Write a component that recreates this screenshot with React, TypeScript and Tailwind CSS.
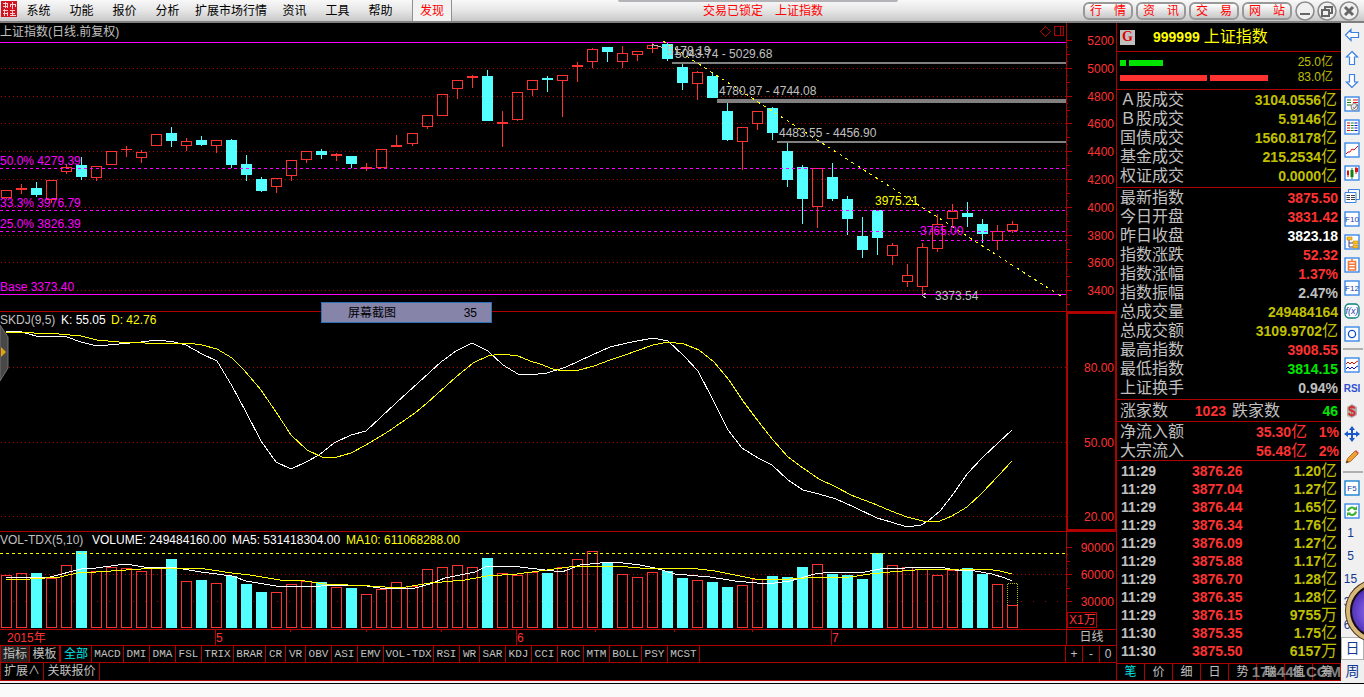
import React from "react";

type Candle = [boolean, number, number, number, number, number];

// up?, high, body top, body bottom, low, volume top
const CANDLES: Candle[] = [
  [true, 190, 190, 198, 199, 575], [true, 184, 188, 190, 194, 573], [false, 182, 188, 195, 197, 573],
  [true, 180, 180, 200, 203, 578], [true, 164, 167, 172, 174, 565], [false, 157, 165, 177, 180, 551],
  [true, 166, 166, 178, 181, 571], [true, 151, 151, 165, 165, 567], [true, 146, 149, 150, 157, 568],
  [true, 150, 152, 158, 163, 571], [true, 134, 134, 146, 146, 568], [false, 127, 133, 141, 147, 559],
  [true, 138, 141, 146, 151, 581], [false, 136, 140, 145, 146, 580], [true, 140, 140, 146, 153, 583],
  [false, 139, 140, 165, 168, 576], [false, 155, 164, 175, 181, 584], [false, 177, 179, 191, 192, 592],
  [true, 178, 178, 187, 193, 592], [true, 160, 160, 176, 181, 584], [true, 151, 151, 160, 163, 581],
  [false, 149, 151, 155, 159, 582], [true, 153, 154, 156, 161, 587], [false, 156, 156, 164, 168, 588],
  [true, 163, 167, 169, 171, 594], [true, 149, 149, 168, 168, 589], [true, 135, 145, 147, 147, 582],
  [true, 133, 133, 144, 146, 586], [true, 115, 115, 127, 129, 569], [true, 94, 94, 116, 116, 567],
  [true, 80, 80, 89, 99, 565], [true, 75, 76, 78, 88, 567], [false, 70, 76, 121, 121, 558],
  [true, 111, 122, 124, 147, 573], [true, 92, 92, 120, 121, 575], [true, 80, 80, 90, 96, 572],
  [false, 76, 78, 80, 92, 573], [true, 75, 75, 81, 117, 567], [true, 62, 65, 67, 82, 559],
  [true, 48, 49, 62, 68, 551], [false, 47, 47, 52, 62, 562], [true, 46, 53, 62, 68, 574],
  [true, 51, 51, 55, 61, 577], [true, 43, 45, 49, 53, 572], [false, 43, 44, 59, 61, 571],
  [false, 64, 67, 83, 90, 578], [true, 71, 72, 84, 100, 580], [false, 73, 76, 98, 98, 582],
  [false, 103, 111, 140, 141, 587], [true, 127, 127, 142, 170, 585], [true, 111, 111, 124, 130, 579],
  [false, 107, 108, 133, 140, 576], [false, 143, 151, 180, 187, 577], [false, 165, 167, 199, 224, 567],
  [true, 168, 168, 207, 228, 564], [false, 163, 177, 199, 201, 574], [false, 196, 199, 219, 235, 575],
  [false, 217, 236, 250, 258, 579], [false, 210, 210, 238, 255, 553], [true, 243, 245, 256, 265, 565],
  [true, 264, 275, 282, 287, 567], [true, 243, 247, 287, 294, 569], [true, 214, 224, 249, 252, 575],
  [true, 204, 211, 219, 228, 570], [false, 202, 213, 217, 227, 568], [false, 219, 224, 234, 243, 574],
  [true, 225, 231, 241, 250, 584], [true, 221, 224, 231, 233, 605],
];

const K_LINE = "6,331 22,332 36,336 67,337 81,342 97,346 119,344 141,342 157,340 174,342 186,345 202,354 217,361 232,386 246,412 261,441 276,462 291,469 306,462 319,455 334,443 351,435 366,431 396,403 441,362 456,351 472,343 488,351 503,365 518,374 530,375 547,373 566,367 592,355 610,347 627,343 653,338 668,341 684,356 698,371 713,400 728,430 742,448 758,458 772,465 788,480 803,490 819,494 836,499 854,507 877,518 891,522 907,527 921,525 928,521 940,511 954,493 967,474 982,458 999,442 1012,430";
const D_LINE = "6,333 22,332 34,333 59,334 81,336 97,340 119,342 145,343 165,343 188,343 202,345 217,349 232,358 244,370 261,390 276,412 291,435 307,450 322,457 337,457 351,453 366,445 389,431 415,413 427,403 456,377 473,363 488,356 501,354 518,356 530,361 540,364 553,369 564,371 579,370 594,366 610,360 625,355 653,345 668,342 684,344 699,350 714,362 729,380 743,401 758,421 773,440 788,457 803,468 819,479 836,487 851,495 877,505 891,511 907,517 923,521 940,521 952,516 967,507 982,493 999,475 1012,461";
const MA5_LINE = "6,577 50,577 81,569 96,568 126,564 150,568 171,567 201,572 232,576 246,581 276,586 306,587 336,585 360,585 380,588 415,588 430,584 445,578 475,572 487,566 520,567 562,572 580,565 600,563 615,562 640,565 655,568 675,574 710,577 735,581 757,583 775,583 790,581 815,574 832,572 865,572 880,569 905,568 930,567 940,567 955,570 975,571 992,574 1005,578 1012,581";
const MA10_LINE = "6,580 30,579 60,577 81,572 96,572 126,570 156,568 171,568 205,569 232,573 250,575 280,580 305,581 325,584 370,586 400,588 430,583 465,580 487,576 517,574 547,570 577,566 615,566 640,568 690,568 715,571 755,579 790,579 805,578 850,577 870,574 890,572 915,570 960,569 985,569 1000,571 1012,574";

const UP = "#ff3232";
const DOWN = "#54ffff";
const GRID = "#b00000";
const MAGENTA = "#ff00ff";

const centerX = (i: number) => Math.floor(6.6 + 15.015 * i);

function Hollow({ x, top, bottom }: { x: number; top: number; bottom: number }) {
  if (bottom - top <= 2) return <rect x={x - 5} y={top} width={11} height={bottom - top} fill={UP} />;
  return <rect x={x - 4.5} y={top + 0.5} width={10} height={bottom - top - 1} fill="none" stroke={UP} />;
}

function GridLine({ y, gap = "1 3" }: { y: number; gap?: string }) {
  return <line x1={1} x2="100%" y1={y + 0.5} y2={y + 0.5} stroke={GRID} strokeDasharray={gap} />;
}

const PRICES = [5200, 5000, 4800, 4600, 4400, 4200, 4000, 3800, 3600, 3400];
const PRICE_Y = [40, 68, 96, 123, 151, 179, 207, 235, 262, 290];

function PricePlot() {
  return (
    <svg className="block h-full min-w-0 flex-1 text-[12px]" shapeRendering="crispEdges" role="img" aria-label="上证指数日线">
      <g transform="translate(0,-23)">
        {PRICE_Y.slice(1).map((y) => <GridLine key={y} y={y} />)}
        {CANDLES.map(([up, high, top, bottom, low], i) => {
          const x = centerX(i);
          return (
            <g key={i} fill={up ? UP : DOWN}>
              <rect x={x} y={high} width={1} height={top - high} />
              <rect x={x} y={bottom} width={1} height={low - bottom} />
              {up ? <Hollow x={x} top={top} bottom={bottom} /> : <rect x={x - 5} y={top} width={11} height={bottom - top} />}
            </g>
          );
        })}
        <g fill="#808080">
          <rect x={672} y={62} width="100%" height={2} />
          <rect x={717} y={99} width="100%" height={4} />
          <rect x={777} y={141} width="100%" height={2} />
        </g>
        <g stroke={MAGENTA}>
          <line x1={0} x2="100%" y1={42.5} y2={42.5} />
          <line x1={0} x2="100%" y1={294.5} y2={294.5} />
          {[168, 210, 231].map((y) => (
            <line key={y} x1={0} x2="100%" y1={y + 0.5} y2={y + 0.5} strokeDasharray="3 3" />
          ))}
          <line x1={921} x2="100%" y1={240.5} y2={240.5} strokeDasharray="3 3" />
        </g>
        <line x1={663} y1={41} x2={1062} y2={297} stroke="#ffff00" strokeDasharray="3 4" />
        <path d="M652.5 43.5v4M652.5 44.5l14 4M922.5 295.5l4-3M922.5 295.5l4 3" stroke="#c0c0c0" fill="none" />
        <path d="M1045.5 26.5l5 5l-5 5l-5-5z" stroke={GRID} fill="none" />
        <path d="M1054.5 26.5h9v9h-9zM1060.5 26.5v9" stroke={GRID} fill="none" />
        <g fill="#c0c0c0">
          <text x={0} y={36}>上证指数(日线.前复权)</text>
          <text x={667} y={55}>5178.19</text>
          <text x={675} y={58}>5043.74 - 5029.68</text>
          <text x={719} y={95}>4780.87 - 4744.08</text>
          <text x={779} y={137}>4483.55 - 4456.90</text>
          <text x={935} y={300}>3373.54</text>
        </g>
        <g fill={MAGENTA}>
          <text x={0} y={165}>50.0% 4279.39</text>
          <text x={0} y={207}>33.3% 3976.79</text>
          <text x={0} y={228}>25.0% 3826.39</text>
          <text x={0} y={291}>Base 3373.40</text>
          <text x={920} y={235}>3765.00</text>
        </g>
        <text x={875} y={205} fill="#ffff00">3975.21</text>
      </g>
    </svg>
  );
}

function PriceAxis() {
  const ticks: React.ReactNode[] = [];
  for (let n = 0; n < 40; n++) {
    const y = Math.round(40 + n * 6.95);
    if (y > 305) break;
    ticks.push(<rect key={n} x={0} y={y} width={n % 4 === 0 ? 5 : n % 2 === 0 ? 3 : 1} height={1} fill={GRID} />);
  }
  return (
    <svg className="block h-full w-[51px] border-x border-[#b00000] text-[12px]" shapeRendering="crispEdges">
      <g transform="translate(0,-23)">
        {ticks}
        {PRICES.map((p, i) => (
          <text key={p} x={47} y={PRICE_Y[i] + 5} textAnchor="end" fill={UP}>{p}</text>
        ))}
      </g>
    </svg>
  );
}

function KdjPane() {
  return (
    <section className="flex h-[220px] border-b border-[#b00000]">
      <svg className="block h-full min-w-0 flex-1 text-[12px]" shapeRendering="crispEdges" role="img" aria-label="SKDJ">
        <g transform="translate(0,-312)">
          {[367, 442, 516].map((y) => <GridLine key={y} y={y} />)}
          <polyline points={K_LINE} fill="none" stroke="#ffffff" />
          <polyline points={D_LINE} fill="none" stroke="#ffff00" />
          <text x={0} y={324} fill="#c0c0c0">SKDJ(9,5)</text>
          <text x={61} y={324} fill="#ffffff">K: 55.05</text>
          <text x={111} y={324} fill="#ffff00">D: 42.76</text>
        </g>
      </svg>
      <svg className="block h-full w-[51px] border-2 border-[#b00000] text-[12px]">
        <g fill={UP} textAnchor="end">
          <text x={46} y={58}>80.00</text>
          <text x={46} y={133}>50.00</text>
          <text x={46} y={207}>20.00</text>
        </g>
      </svg>
    </section>
  );
}

function VolumePane() {
  return (
    <section className="flex h-[98px] border-b border-[#b00000]">
      <svg className="block h-full min-w-0 flex-1 text-[12px]" shapeRendering="crispEdges" role="img" aria-label="成交量">
        <g transform="translate(0,-532)">
          <GridLine y={574} />
          <GridLine y={601} gap="1 11" />
          {CANDLES.map(([up, , , , , v], i) => {
            const x = centerX(i);
            return up ? (
              <rect key={i} x={x - 4.5} y={v + 0.5} width={10} height={627 - v} fill="none" stroke={UP} />
            ) : (
              <rect key={i} x={x - 5} y={v} width={11} height={628 - v} fill={DOWN} />
            );
          })}
          <path d="M1007.5 605v-21.5h10v21.5" fill="none" stroke="#c0c000" strokeDasharray="1 1" />
          <line x1={0} x2="100%" y1={553.5} y2={553.5} stroke="#ffff00" strokeDasharray="3 3" />
          <polyline points={MA5_LINE} fill="none" stroke="#ffffff" />
          <polyline points={MA10_LINE} fill="none" stroke="#ffff00" />
          <text x={0} y={544} fill="#c0c0c0">VOL-TDX(5,10)</text>
          <text x={92} y={544} fill="#ffffff">VOLUME: 249484160.00</text>
          <text x={232} y={544} fill="#ffffff">MA5: 531418304.00</text>
          <text x={346} y={544} fill="#ffff00">MA10: 611068288.00</text>
        </g>
      </svg>
      <svg className="block h-full w-[51px] border-x border-[#b00000] text-[12px]" shapeRendering="crispEdges">
        <g transform="translate(0,-532)">
          {[547, 554, 561, 568, 574, 581, 588, 595, 601].map((y, n) => (
            <rect key={y} x={0} y={y} width={n % 4 === 0 ? 5 : n % 2 === 0 ? 3 : 1} height={1} fill={GRID} />
          ))}
          <g fill={UP} textAnchor="end">
            <text x={47} y={552}>90000</text>
            <text x={47} y={579}>60000</text>
            <text x={47} y={606}>30000</text>
          </g>
          <rect x={0.5} y={612.5} width={29} height={15} fill="none" stroke={GRID} />
          <text x={2} y={624} fill={UP}>X1万</text>
        </g>
      </svg>
    </section>
  );
}

function TimeAxis() {
  return (
    <div className="flex h-4 border-b border-[#b00000]">
      <svg className="block h-full min-w-0 flex-1 text-[12px]" shapeRendering="crispEdges">
        {[215, 516, 831].map((x) => <rect key={x} x={x} y={0} width={1} height={16} fill={GRID} />)}
        {[290, 366, 441, 595, 674, 752].map((x) => <rect key={x} x={x} y={0} width={1} height={2} fill={GRID} />)}
        <g fill={UP}>
          <text x={7} y={12}>2015年</text>
          <text x={216} y={12}>5</text>
          <text x={517} y={12}>6</text>
          <text x={832} y={12}>7</text>
        </g>
      </svg>
      <div className="w-[51px] border-x border-[#b00000] text-center text-[12px] leading-[15px] text-[#c0c0c0]">日线</div>
    </div>
  );
}

const INDICATORS: [string, string][] = [
  ["MACD", "w-8"], ["DMI", "w-[26px]"], ["DMA", "w-[26px]"], ["FSL", "w-[26px]"], ["TRIX", "w-8"], ["BRAR", "w-8"],
  ["CR", "w-5"], ["VR", "w-5"], ["OBV", "w-[26px]"], ["ASI", "w-[26px]"], ["EMV", "w-[26px]"], ["VOL-TDX", "w-[50px]"],
  ["RSI", "w-[26px]"], ["WR", "w-5"], ["SAR", "w-[26px]"], ["KDJ", "w-[26px]"], ["CCI", "w-[26px]"], ["ROC", "w-[26px]"],
  ["MTM", "w-[26px]"], ["BOLL", "w-8"], ["PSY", "w-[26px]"], ["MCST", "w-8"],
];

function IndicatorTabs() {
  return (
    <nav className="flex h-[17px] border-b border-[#b00000] text-[12px] leading-4 text-[#c0c0c0]">
      <button className="w-[30px] border-x border-[#b00000] bg-[#222222]">指标</button>
      <button className="w-[31px] border-r-2 border-[#b00000]">模板</button>
      <button className="w-[31px] border-r border-[#b00000] text-[#00e6e6]">全部</button>
      {INDICATORS.map(([name, width]) => (
        <button key={name} className={`${width} flex justify-center overflow-hidden border-r border-[#b00000] text-[11px]`} style={{ fontFamily: '"Liberation Mono", monospace' }}>
          {name}
        </button>
      ))}
      <div className="ml-auto flex w-[52px] border-x border-[#b00000]">
        <button className="flex-1 border-r border-[#b00000]" aria-label="放大">+</button>
        <button className="flex-1 border-r border-[#b00000]" aria-label="缩小">-</button>
        <button className="flex-1">0</button>
      </div>
    </nav>
  );
}

const MENU = ["系统", "功能", "报价", "分析", "扩展市场行情", "资讯", "工具", "帮助"];

function Header() {
  return (
    <header className="relative flex h-[23px] shrink-0 items-stretch border-b-2 border-[#808080] bg-linear-to-b from-[#f8f8f8] via-[#e6e6e6] to-[#c8c8c8] text-[12px] leading-[21px] text-black">
      <div className="absolute top-0 left-[618px] h-[2px] w-[280px] rounded-b bg-[#b4b4b8]" />
      <svg className="mt-px ml-px h-4 w-4 shrink-0" viewBox="0 0 16 16" shapeRendering="crispEdges" aria-label="招商证券">
        <rect width="16" height="16" fill="#d01420" />
        <path d="M2 2.5h5M4.5 1v6M2 5.5h5M6.5 3v4M9 3.5h5M11.5 1v7M9.5 3v3M14 3v3M2 9.5h5M3.5 8v7M2 12.5h5M6 11v4M9 9.5h5M11.5 9v5M9 12.5h5M9 14.5h6" stroke="#ffd0d0" fill="none" />
      </svg>
      <nav className="flex">
        {MENU.map((m) => (
          <button key={m} className="min-w-[43px] px-[6px] pt-px">{m}</button>
        ))}
      </nav>
      <button className="ml-[10px] w-10 border-x border-[#909090] bg-[#f2f2f2] pt-px text-[#ff0000]">发现</button>
      <div className="ml-[251px] flex gap-3 pt-px text-[#ff0000]">
        <span>交易已锁定</span>
        <span>上证指数</span>
      </div>
      <div className="mr-[5px] ml-auto flex items-center gap-[3px]">
        {["行情", "资讯", "交易", "网站"].map((t) => (
          <button key={t} className="flex h-[18px] w-[50px] items-center justify-between rounded-md border-2 border-[#989898] bg-linear-to-b from-white to-[#c8c8c8] px-[5px] leading-3 text-[#ff0000]">
            <span>{t[0]}</span>
            <span>{t[1]}</span>
          </button>
        ))}
        <div className="flex gap-[2px]">
          {["M5 13h10", "M8 8V6h7v6h-3M5 9h7v6h-7z", "M6 6l8 8M14 6l-8 8"].map((d, i) => (
            <button key={d} aria-label={["最小化", "还原", "关闭"][i]}>
              <svg width="20" height="20" viewBox="0 0 20 20" className="block">
                <circle cx="10" cy="10" r="9" fill="#f0f0f0" stroke="#8c8c8c" strokeWidth="1.6" />
                <path d={d} fill="none" stroke="#666666" strokeWidth={i === 2 ? 3 : 2} />
              </svg>
            </button>
          ))}
        </div>
      </div>
    </header>
  );
}

const Y = "text-[#c0c000]";
const R = "text-[#ff3232]";
const TURNOVER = [["Ａ股成交", "3104.0556"], ["Ｂ股成交", "5.9146"], ["国债成交", "1560.8178"], ["基金成交", "215.2534"], ["权证成交", "0.0000"]];
const QUOTES: [string, string, string, string][] = [
  ["最新指数", "3875.50", "", R], ["今日开盘", "3831.42", "", R], ["昨日收盘", "3823.18", "", "text-white"],
  ["指数涨跌", "52.32", "", R], ["指数涨幅", "1.37%", "", R], ["指数振幅", "2.47%", "", "text-[#c0c0c0]"],
  ["总成交量", "249484164", "", Y], ["总成交额", "3109.9702", "亿", Y], ["最高指数", "3908.55", "", R],
  ["最低指数", "3814.15", "", "text-[#00e600]"], ["上证换手", "0.94%", "", "text-[#c0c0c0]"],
];
const TICKS = [
  ["11:29", "3876.26", "1.20", "亿"], ["11:29", "3877.04", "1.27", "亿"], ["11:29", "3876.44", "1.65", "亿"],
  ["11:29", "3876.34", "1.76", "亿"], ["11:29", "3876.09", "1.27", "亿"], ["11:29", "3875.88", "1.17", "亿"],
  ["11:29", "3876.70", "1.28", "亿"], ["11:29", "3876.35", "1.28", "亿"], ["11:29", "3876.15", "9755", "万"],
  ["11:30", "3875.35", "1.75", "亿"], ["11:30", "3875.50", "6157", "万"],
];

function Num({ value, unit = "" }: { value: string; unit?: string }) {
  return (
    <>
      <span className="text-[14px] leading-none font-bold">{value}</span>
      {unit}
    </>
  );
}

function QuotePanel() {
  return (
    <aside className="flex w-[224px] shrink-0 flex-col text-[16px] leading-[18px] text-[#c0c0c0]">
      <div className="flex h-[29px] items-center border-b border-[#b00000] pl-[3px] text-[#ffff00]">
        <span className="flex h-[15px] w-[15px] items-center justify-center bg-[#c0c0c0] text-[14px] font-bold text-[#e00000]" style={{ fontFamily: '"Liberation Serif", serif' }}>G</span>
        <span className="ml-[18px] text-[14px] font-bold">999999</span>
        <span className="ml-1">上证指数</span>
      </div>
      <div className="flex h-[38px] justify-between border-b border-[#b00000] pr-2 pl-[3px]">
        <div className="flex flex-col gap-[9px] pt-2">
          <div className="flex gap-[3px]">
            <div className="h-[6px] w-[6px] bg-[#00e600]" />
            <div className="h-[6px] w-[34px] bg-[#00e600]" />
          </div>
          <div className="flex gap-[3px]">
            <div className="h-[6px] w-[87px] bg-[#ff3232]" />
            <div className="h-[6px] w-[58px] bg-[#ff3232]" />
          </div>
        </div>
        <div className="flex flex-col pt-[3px] text-right text-[12px] leading-[15px] text-[#c0c000]">
          <span>25.0亿</span>
          <span>83.0亿</span>
        </div>
      </div>
      <div className="border-b border-[#b00000] pr-1 pb-[2px] pl-[3px]">
        <table className="w-full">
          <tbody>
            {TURNOVER.map(([k, v]) => (
              <tr key={k} className="h-[19px]">
                <th className="p-0 text-left font-normal">{k}</th>
                <td className={`p-0 text-right ${Y}`}><Num value={v} unit="亿" /></td>
              </tr>
            ))}
          </tbody>
        </table>
      </div>
      <div className="border-b border-[#b00000] pr-[3px] pb-[2px] pl-[3px]">
        <table className="w-full">
          <tbody>
            {QUOTES.map(([k, v, u, c]) => (
              <tr key={k} className="h-[19px]">
                <th className="p-0 text-left font-normal">{k}</th>
                <td className={`p-0 text-right ${c}`}><Num value={v} unit={u} /></td>
              </tr>
            ))}
          </tbody>
        </table>
      </div>
      <div className="flex h-[22px] items-center border-b border-[#b00000] pr-[3px] pl-[3px]">
        <span>涨家数</span>
        <span className="flex-1 text-right text-[14px] font-bold text-[#ff3232]">1023</span>
        <span className="ml-[6px]">跌家数</span>
        <span className="w-[58px] text-right text-[14px] font-bold text-[#00e600]">46</span>
      </div>
      <div className="border-b border-[#b00000] pr-[2px] pl-[3px]">
        <table className="w-full">
          <tbody className={R}>
            {[["净流入额", "35.30", "1%"], ["大宗流入", "56.48", "2%"]].map(([k, v, p]) => (
              <tr key={k} className="h-[19px]">
                <th className="p-0 text-left font-normal text-[#c0c0c0]">{k}</th>
                <td className="p-0 text-right"><Num value={v} unit="亿" /></td>
                <td className="w-8 p-0 text-right"><Num value={p} /></td>
              </tr>
            ))}
          </tbody>
        </table>
      </div>
      <div className="flex-1 px-[4px] pt-px">
        <table className="w-full">
          <tbody>
            {TICKS.map(([t, p, v, u], i) => (
              <tr key={i} className="h-[18px]">
                <td className="w-[71px] p-0"><Num value={t} /></td>
                <td className={`p-0 ${R}`}><Num value={p} /></td>
                <td className={`p-0 text-right ${Y}`}><Num value={v} unit={u} /></td>
              </tr>
            ))}
          </tbody>
        </table>
      </div>
      <nav className="relative flex h-[18px] border-y border-[#b00000] text-[12px] leading-4">
        {["笔", "价", "细", "日", "势", "联", "值", "筹"].map((t, i) => (
          <button key={t} className={`flex-1 border-r border-[#b00000] ${i === 0 ? "text-[#00e6e6]" : ""}`}>{t}</button>
        ))}
        <span className="pointer-events-none absolute right-0 bottom-0 text-[15px] leading-4 font-bold text-[#a0a0a0] opacity-80">
          178448.COM
        </span>
      </nav>
    </aside>
  );
}

const Framed = ({ children, color = "#2f80e8" }: { children?: React.ReactNode; color?: string }) => (
  <>
    <rect x="1" y="1" width="14" height="14" fill="#ffffff" stroke={color} strokeWidth="1.3" />
    {children}
  </>
);
const Glyph = ({ children }: { children: string }) => (
  <text x="8" y="11" textAnchor="middle" fontSize="8" fill="#1840b0">{children}</text>
);
const arrow = (deg: number) => (
  <path d="M1.500 8L7 2.500V5.500H14.500V10.500H7V13.500Z" transform={`rotate(${deg} 8 8)`} fill="#ffffff" stroke="#3c80e0" strokeWidth="1.2" />
);

const TOOLS: (null | [string, React.ReactNode])[] = [
  ["后退", arrow(0)],
  ["上翻", arrow(90)],
  ["下翻", arrow(270)],
  ["报表", <Framed><path d="M3 4h4M3 6.500h4M3 9h4" stroke="#108010" /><path d="M9 4h5M9 6.500h5" stroke="#e01010" /><circle cx="10.500" cy="11" r="3.500" fill="#e8e8e8" stroke="#808080" /><path d="M9 11.500l1.500 1l3-4" stroke="#606060" fill="none" /></Framed>],
  ["行情表", <Framed><path d="M3 4h3M3 6.500h3M3 9h3M3 11.500h3" stroke="#e01010" /><path d="M6.700 4h3M6.700 6.500h3M6.700 9h3M6.700 11.500h3" stroke="#108010" /><path d="M10.500 4h3M10.500 6.500h3M10.500 9h3M10.500 11.500h3" stroke="#1010d0" /></Framed>],
  ["分时", <Framed><path d="M2 12l2-2l2 0l2-3l2 1l4-4" stroke="#e01010" fill="none" /></Framed>],
  ["K线", <Framed><path d="M4 5v7M12 2v7" stroke="#e01010" /><path d="M3 6h2v4H3zM11 3h3v4h-3z" fill="#e01010" /><path d="M8 3v11" stroke="#108010" /><path d="M6.500 5h3v7h-3z" fill="#108010" /></Framed>],
  ["多窗口", <><path d="M4.500 1.500h11v10h-11z" fill="#fff" stroke="#3c80e0" /><path d="M1 4.500h11v10H1z" fill="#fff" stroke="#3c80e0" /><path d="M2.500 7.500h3.500M7 7.500h4M2.500 9.500h3.500M7 9.500h4M2.500 11.500h3.500M7 11.500h4" stroke="#404040" /></>],
  ["F10", <Framed><Glyph>F10</Glyph></Framed>],
  ["板块", <Framed><path d="M5 6v7h5M5 9h5" stroke="#404080" fill="none" /><path d="M3 3h5v3H3zM9 7h5v3H9zM9 11h5v3H9z" fill="#ffc020" stroke="#c08000" strokeWidth=".6" /></Framed>],
  ["自选", <Framed><path d="M4.500 4.500h7v8.500h-7zM4.500 7.300h7M4.500 10h7M8 2v2.500" stroke="#f07838" strokeWidth="1.600" fill="none" /></Framed>],
  ["F12", <Framed><Glyph>F12</Glyph></Framed>],
  ["公式", <><rect x="1" y="1" width="14" height="14" rx="4" fill="#fff" stroke="#108080" strokeWidth="1.300" /><text x="8" y="11" textAnchor="middle" fontSize="9" fontStyle="italic" fill="#1840b0">f(x)</text></>],
  ["圆", <Framed><circle cx="8" cy="8" r="3.600" fill="none" stroke="#1050c0" strokeWidth="1.300" /></Framed>],
  null,
  ["指标线", <Framed><path d="M2 7l2-2l2 2l2-2l2 2l2-2l2-1" stroke="#e01010" fill="none" /><path d="M2 12l2-2l2 2l2-2l2 2l2-2l2-1" stroke="#1010d0" fill="none" /></Framed>],
  ["RSI", <text x="8" y="12" textAnchor="middle" fontSize="10" fontWeight="bold" fill="#3050d0">RSI</text>],
  ["资金", <><path d="M3 4l5-3l5 3v8l-5 3l-5-2z" fill="#b0b0b0" /><text x="8" y="13" textAnchor="middle" fontSize="14" fontWeight="bold" fill="#d02828">$</text></>],
  ["移动", <path d="M8 0l3 4H9v3h3V5l4 3l-4 3V9H9v3h2l-3 4l-3-4h2V9H4v2L0 8l4-3v2h3V4H5z" fill="#1858c8" />],
  ["画线", <><path d="M2 14l1.500-4.500L11 2l3 3l-7.500 7.500z" fill="#f0a030" stroke="#905010" strokeWidth=".7" /><path d="M11 2l1-1l3 3l-1 1z" fill="#e05050" /><path d="M2 14l1-2.500l1.500 1.500z" fill="#303030" /></>],
  null,
  ["F5", <Framed color="#0878d0"><Glyph>F5</Glyph></Framed>],
  ["刷新", <Framed><path d="M4 8a4 4 0 0 1 7-2M12 8.500a4 4 0 0 1-7 2" stroke="#38b030" strokeWidth="2" fill="none" /><path d="M9 7h4V3zM7 9.500H3v4z" fill="#38b030" /></Framed>],
];

function Toolbar() {
  return (
    <nav className="relative flex w-[23px] shrink-0 flex-col overflow-hidden bg-[#f0f0f0] text-center text-[12px] text-[#103890]">
      {TOOLS.map((tool, i) =>
        tool === null ? (
          <hr key={i} className="my-[3px] ml-[2px] w-5 border-t-2 border-[#b0b0b0]" />
        ) : (
          <button key={i} aria-label={tool[0]} className="flex h-[23px] items-center pl-[3px]">
            <svg width="16" height="16" viewBox="0 0 16 16">{tool[1]}</svg>
          </button>
        ),
      )}
      {["1", "5", "15", "30", "60"].map((t) => (
        <button key={t} className="h-[23px] pr-1 leading-[23px]">{t}</button>
      ))}
      <button className="h-[23px] border border-[#b0b0b0] bg-white text-[14px] leading-[21px]">日</button>
      <button className="h-[22px] text-[14px] leading-[22px]">周</button>
      <svg className="absolute top-[555px] left-[3px]" width="20" height="66" viewBox="0 0 20 66">
        <defs>
          <radialGradient id="orb" cx="30" cy="34" r="26" gradientUnits="userSpaceOnUse">
            <stop offset="0" stopColor="#9078f0" />
            <stop offset="0.6" stopColor="#6848d0" />
            <stop offset="1" stopColor="#4828a8" />
          </radialGradient>
        </defs>
        <circle cx="33" cy="33" r="32" fill="#4a3418" />
        <circle cx="33" cy="33" r="29" fill="#140c14" stroke="#d8b878" strokeWidth="4" />
        <circle cx="33" cy="33" r="25" fill="url(#orb)" />
      </svg>
    </nav>
  );
}

export default function App() {
  return (
    <div className="flex min-h-screen flex-col bg-[#fafafa]" style={{ fontFamily: '"Liberation Sans", "Noto Sans CJK SC", sans-serif' }}>
      <Header />
      <div className="flex border-b border-black">
        <div className="flex min-w-0 flex-1 border-b-2 border-[#f0f0f0] bg-black">
          <main className="relative min-w-0 flex-1">
            <section className="flex h-[289px] border-b border-[#b00000]">
              <PricePlot />
              <PriceAxis />
            </section>
            <KdjPane />
            <VolumePane />
            <TimeAxis />
            <IndicatorTabs />
            <div className="flex h-[18px] border-b border-l border-[#b00000] text-[12px] leading-[17px] text-[#c0c0c0]">
              <button className="w-[43px] border-r border-[#b00000]">扩展∧</button>
              <button className="w-14 border-r border-[#b00000]">关联报价</button>
              <div className="ml-auto border-r border-[#b00000]" />
            </div>
            <svg className="absolute top-[302px] left-0" width="9" height="56" viewBox="0 0 9 56" aria-label="展开">
              <path d="M0 0l8 12v31l-8 13z" fill="#484848" stroke="#707070" />
              <path d="M1 22l5 5l-5 5z" fill="#e8a010" />
            </svg>
            <div className="absolute top-[279px] left-[321px] flex h-[21px] w-[171px] items-center justify-between border border-[#2b71b9] bg-[#8784aa] pr-[14px] pl-[26px] text-[12px] text-black">
              <span>屏幕截图</span>
              <span>35</span>
            </div>
          </main>
          <QuotePanel />
        </div>
        <Toolbar />
      </div>
    </div>
  );
}
